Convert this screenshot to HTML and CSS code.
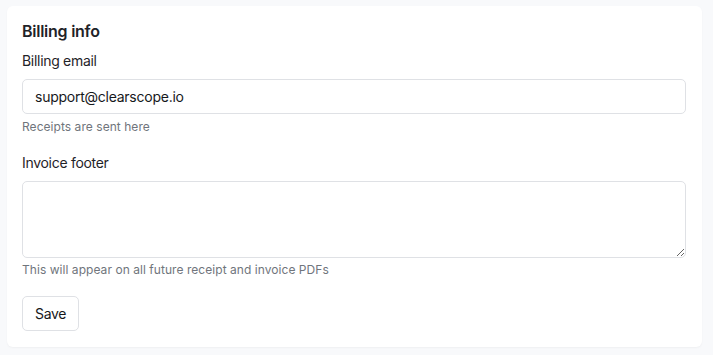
FILE: index.html
```html
<!DOCTYPE html>
<html lang="en">
<head>
<meta charset="UTF-8">
<meta name="viewport" content="width=device-width, initial-scale=1.0">
<title>Billing info</title>
<link rel="stylesheet" href="styles.css">
</head>
<body>

<div class="card">
    <h3 class="card-title">Billing info</h3>

    <div class="field">
        <label for="email">Billing email</label>
        <input type="email" id="email" value="support@clearscope.io">
        <div class="hint">Receipts are sent here</div>
    </div>

    <div class="field">
        <label for="footer">Invoice footer</label>
        <textarea id="footer"></textarea>
        <div class="hint">This will appear on all future receipt and invoice PDFs</div>
    </div>

    <button class="btn">Save</button>
</div>

</body>
</html>
```

FILE: styles.css
```css
body {
    font-family: Inter, "Noto Sans", sans-serif;
    margin: 0;
    padding: 6px 11px 8px 7px;
    background-color: #f8f9fb;
    color: #1f2328;
}
.card {
    background-color: #fff;
    border-radius: 6px;
    padding: 12px 16px 16px 15px;
    box-shadow: 0 1px 2px rgba(0, 0, 0, 0.04);
}
.card-title {
    font-size: 16px;
    font-weight: 600;
    line-height: 26px;
    margin: 0 0 7px;
    letter-spacing: -0.25px;
}
.field {
    margin-bottom: 18px;
}
label {
    display: block;
    font-size: 14px;
    line-height: 20px;
    margin-bottom: 8px;
    letter-spacing: -0.3px;
}
input[type="email"], textarea {
    display: block;
    width: 100%;
    box-sizing: border-box;
    border: 1px solid #dfe1e5;
    border-radius: 5px;
    font-family: inherit;
    font-size: 14px;
    letter-spacing: -0.25px;
    color: #16181b;
    background: #fff;
}
input[type="email"] {
    height: 35px;
    padding: 0 12px;
}
textarea {
    height: 77px;
    padding: 8px 12px;
    resize: vertical;
}
.hint {
    font-size: 12px;
    line-height: 16px;
    color: #70757c;
    margin-top: 5px;
    letter-spacing: 0.05px;
}
textarea + .hint {
    margin-top: 4px;
}
.btn {
    display: block;
    height: 35px;
    padding: 0 12px;
    font-family: inherit;
    font-size: 14px;
    letter-spacing: -0.3px;
    color: #16181b;
    background: #fff;
    border: 1px solid #dfe1e5;
    border-radius: 5px;
    cursor: pointer;
}
.btn:hover {
    background-color: #f6f7f8;
}
```
